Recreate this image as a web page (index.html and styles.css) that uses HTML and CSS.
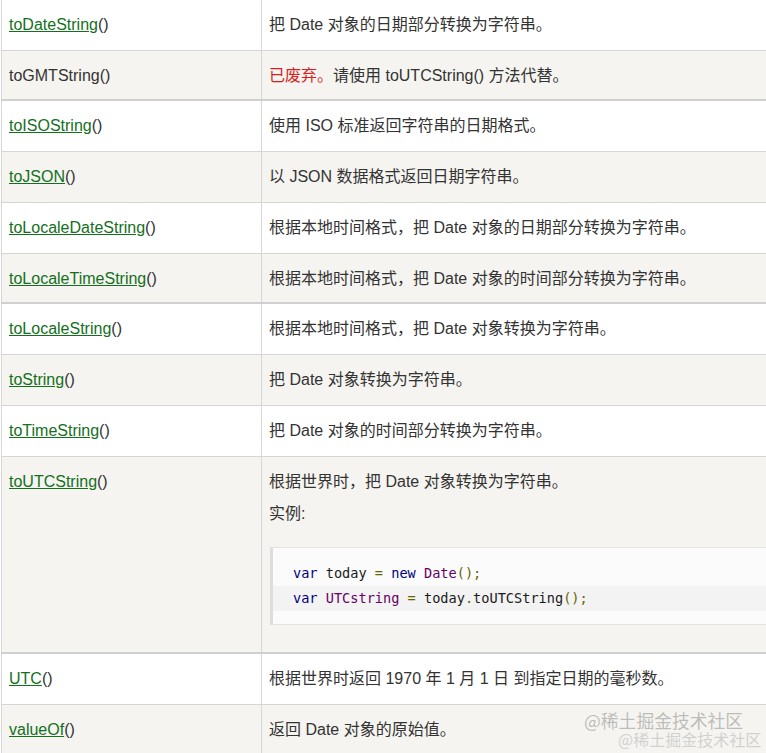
FILE: index.html
```html
<!DOCTYPE html>
<html lang="zh-CN">
<head>
<meta charset="utf-8">
<title>Date 对象方法</title>
<link rel="stylesheet" href="styles.css">
</head>
<body>
<div class="page">
<table class="ref">
  <tr class="odd">
    <td class="name"><a href="#">toDateString</a>()</td>
    <td class="desc">把 Date 对象的日期部分转换为字符串。</td>
  </tr>
  <tr class="even seam">
    <td class="name">toGMTString()</td>
    <td class="desc"><span class="deprecated">已废弃。</span>请使用 toUTCString() 方法代替。</td>
  </tr>
  <tr class="odd">
    <td class="name"><a href="#">toISOString</a>()</td>
    <td class="desc">使用 ISO 标准返回字符串的日期格式。</td>
  </tr>
  <tr class="even">
    <td class="name"><a href="#">toJSON</a>()</td>
    <td class="desc">以 JSON 数据格式返回日期字符串。</td>
  </tr>
  <tr class="odd">
    <td class="name"><a href="#">toLocaleDateString</a>()</td>
    <td class="desc">根据本地时间格式，把 Date 对象的日期部分转换为字符串。</td>
  </tr>
  <tr class="even seam">
    <td class="name"><a href="#">toLocaleTimeString</a>()</td>
    <td class="desc">根据本地时间格式，把 Date 对象的时间部分转换为字符串。</td>
  </tr>
  <tr class="odd">
    <td class="name"><a href="#">toLocaleString</a>()</td>
    <td class="desc">根据本地时间格式，把 Date 对象转换为字符串。</td>
  </tr>
  <tr class="even">
    <td class="name"><a href="#">toString</a>()</td>
    <td class="desc">把 Date 对象转换为字符串。</td>
  </tr>
  <tr class="odd">
    <td class="name"><a href="#">toTimeString</a>()</td>
    <td class="desc">把 Date 对象的时间部分转换为字符串。</td>
  </tr>
  <tr class="even seam tallrow">
    <td class="name"><a href="#">toUTCString</a>()</td>
    <td class="desc">
      <p class="line">根据世界时，把 Date 对象转换为字符串。</p>
      <p class="line example">实例:</p>
      <pre class="code"><span class="ln"><span class="kwd">var</span> <span class="pln">today</span> <span class="pun">=</span> <span class="kwd">new</span> <span class="typ">Date</span><span class="pun">();</span></span><span class="ln alt"><span class="kwd">var</span> <span class="typ">UTCstring</span> <span class="pun">=</span> <span class="pln">today</span><span class="pun">.</span><span class="pln">toUTCString</span><span class="pun">();</span></span></pre>
    </td>
  </tr>
  <tr class="odd">
    <td class="name"><a href="#">UTC</a>()</td>
    <td class="desc">根据世界时返回 1970 年 1 月 1 日 到指定日期的毫秒数。</td>
  </tr>
  <tr class="even">
    <td class="name"><a href="#">valueOf</a>()</td>
    <td class="desc">返回 Date 对象的原始值。</td>
  </tr>
</table>
<div class="watermark">
  <span class="wm1">@稀土掘金技术社区</span>
  <span class="wm2">@稀土掘金技术社区</span>
</div>
</div>
</body>
</html>
```

FILE: styles.css
```css
html, body {
  margin: 0;
  padding: 0;
  background: #ffffff;
  overflow: hidden;
}

.page {
  position: relative;
  width: 766px;
  height: 753px;
  overflow: hidden;
  padding-left: 1px;
  box-sizing: border-box;
}

.ref {
  border-collapse: collapse;
  width: 820px;
  font-family: "Liberation Sans", "Noto Sans CJK SC", sans-serif;
  font-size: 16px;
  color: #333333;
  table-layout: fixed;
}

.ref td {
  border: 1px solid #d6d6d6;
  border-top: none;
  padding: 14px 7px 14px 7px;
  line-height: 22px;
  vertical-align: top;
  height: 22px;
}

.ref td.name {
  width: 245px;
}

.ref tr.odd td {
  background: #ffffff;
}

.ref tr.even td {
  background: #f5f4f0;
}

.ref tr.seam td {
  border-bottom: 2px solid #d0d0d0;
  padding-bottom: 12px;
}

.ref tr.tallrow td {
  padding-bottom: 27px;
}

.ref a {
  color: #13701c;
  text-decoration: underline;
}

.deprecated {
  color: #d81e1e;
}

.line {
  margin: 0;
  line-height: 22px;
}

.example {
  margin-top: 10px;
}

.code {
  margin: 22px 0 0 1px;
  padding: 13px 0 13px 20px;
  background: #fbfbfb;
  border-top: 1px solid #e3e3e3;
  border-bottom: 1px solid #e3e3e3;
  border-left: 3px solid #dddddd;
  font-family: "DejaVu Sans Mono", "Liberation Mono", monospace;
  font-size: 13.6px;
  line-height: 25px;
  color: #000000;
}

.code .ln {
  display: block;
  margin-left: -20px;
  padding-left: 20px;
}

.code .ln.alt {
  background: #f3f3f3;
}

.kwd { color: #000088; }
.typ { color: #660066; }
.pun { color: #666600; }
.pln { color: #1a1a1a; }

.watermark {
  position: absolute;
  right: 0;
  bottom: 0;
  width: 200px;
  height: 50px;
  font-family: "Noto Sans CJK SC", sans-serif;
  pointer-events: none;
}

.wm1 {
  position: absolute;
  left: 18px;
  top: 4px;
  font-size: 17.8px;
  color: rgba(170, 170, 170, 0.75);
  white-space: nowrap;
}

.wm2 {
  position: absolute;
  left: 52px;
  top: 24px;
  font-size: 16px;
  color: rgba(200, 200, 200, 0.8);
  white-space: nowrap;
}
```
